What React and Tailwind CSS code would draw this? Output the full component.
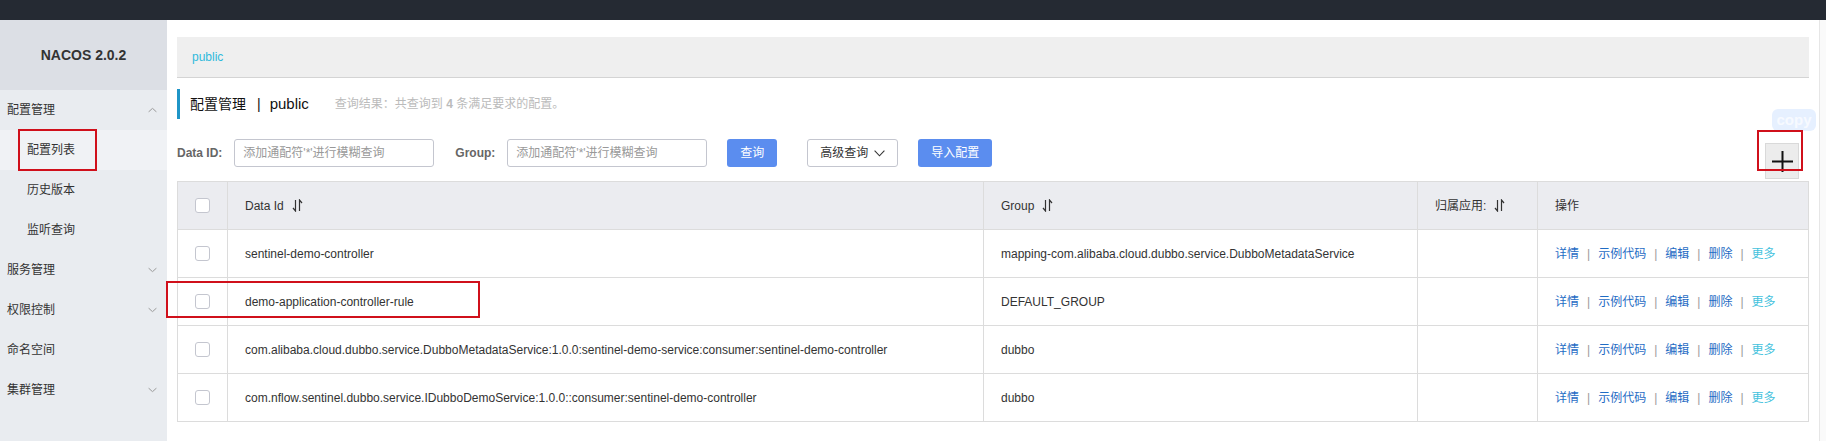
import React from "react";

const FONT = "font-['Liberation_Sans','Noto_Sans_CJK_SC',sans-serif]";

function Chevron({ up }) {
  return (
    <svg width="9" height="5" viewBox="0 0 9 5" className="absolute right-[10px] top-1/2 -translate-y-1/2">
      {up ? (
        <path d="M0.5 4.5 L4.5 0.8 L8.5 4.5" fill="none" stroke="#999" strokeWidth="1" />
      ) : (
        <path d="M0.5 0.5 L4.5 4.2 L8.5 0.5" fill="none" stroke="#999" strokeWidth="1" />
      )}
    </svg>
  );
}

function SortIcon() {
  return (
    <svg width="11" height="13" viewBox="0 0 11 13" className="ml-[8px] inline-block">
      <path d="M3.5 1 V12 L1 9" fill="none" stroke="#333" strokeWidth="1.2" />
      <path d="M7.5 12 V1 L10 4" fill="none" stroke="#333" strokeWidth="1.2" />
    </svg>
  );
}

function Checkbox() {
  return <div className="w-[15px] h-[15px] rounded-[3px] border border-[#c4c6cf] bg-white mx-auto" />;
}

const rows = [
  ["sentinel-demo-controller", "mapping-com.alibaba.cloud.dubbo.service.DubboMetadataService"],
  ["demo-application-controller-rule", "DEFAULT_GROUP"],
  [
    "com.alibaba.cloud.dubbo.service.DubboMetadataService:1.0.0:sentinel-demo-service:consumer:sentinel-demo-controller",
    "dubbo",
  ],
  ["com.nflow.sentinel.dubbo.service.IDubboDemoService:1.0.0::consumer:sentinel-demo-controller", "dubbo"],
];

function Actions() {
  const Sep = () => <span className="text-[#999] mx-[8px]">|</span>;
  return (
    <div className="flex items-center text-[12px] text-[#1f6cc4]">
      <span>详情</span>
      <Sep />
      <span>示例代码</span>
      <Sep />
      <span>编辑</span>
      <Sep />
      <span>删除</span>
      <Sep />
      <span className="text-[#44c2dd]">更多</span>
    </div>
  );
}

export default function App() {
  const menu = [
    { label: "配置管理", chevron: "up", sub: false },
    { label: "配置列表", sub: true, active: true },
    { label: "历史版本", sub: true },
    { label: "监听查询", sub: true },
    { label: "服务管理", chevron: "down" },
    { label: "权限控制", chevron: "down" },
    { label: "命名空间" },
    { label: "集群管理", chevron: "down" },
  ];

  return (
    <div className={`${FONT} w-[1826px] h-[441px] flex flex-col overflow-hidden bg-white`}>
      <div className="h-[20px] bg-[#252a33] shrink-0" />
      <div className="flex flex-1 min-h-0">
        {/* Sidebar */}
        <aside className="relative w-[167px] shrink-0 bg-[#e9ecf0]">
          <div className="h-[70px] bg-[#dcdfe5] flex items-center justify-center text-[14px] font-bold text-[#333]">
            NACOS 2.0.2
          </div>
          {menu.map((m, i) => (
            <div
              key={i}
              className={`relative h-[40px] flex items-center text-[12px] text-[#333] ${
                m.sub ? "pl-[27px]" : "pl-[7px]"
              } ${m.active ? "bg-[#f0f2f5]" : ""}`}
            >
              {m.label}
              {m.chevron && <Chevron up={m.chevron === "up"} />}
            </div>
          ))}
          <div className="absolute left-[18px] top-[109px] w-[79px] h-[42px] border-2 border-[#d0101b]" />
        </aside>

        {/* Main */}
        <main className="relative flex-1 min-w-0 pl-[10px] pr-[10px] pt-[17px]">
          <div className="h-[41px] bg-[#efefef] border-b border-[#d4d4d4] flex items-center pl-[15px] text-[12px] text-[#2fbadc]">
            public
          </div>

          <div className="mt-[11px] h-[30px] flex items-center border-l-[3px] border-[#1f95c7] pl-[10px]">
            <span className="text-[14px] text-[#111]">配置管理</span>
            <span className="text-[14px] text-[#111] ml-[11px]">|</span>
            <span className="text-[15px] text-[#111] ml-[9px]">public</span>
            <span className="text-[12px] text-[#bbb] ml-[26px]">
              查询结果：共查询到 <b className="font-bold">4</b> 条满足要求的配置。
            </span>
          </div>

          <div className="mt-[20px] h-[28px] flex items-center">
            <span className="text-[12px] font-bold text-[#666]">Data ID:</span>
            <div className="ml-[12px] w-[200px] h-[28px] border border-[#c4c6cf] rounded-[3px] flex items-center pl-[8px] text-[12px] text-[#999]">
              添加通配符'*'进行模糊查询
            </div>
            <span className="ml-[21px] text-[12px] font-bold text-[#666]">Group:</span>
            <div className="ml-[12px] w-[200px] h-[28px] border border-[#c4c6cf] rounded-[3px] flex items-center pl-[8px] text-[12px] text-[#999]">
              添加通配符'*'进行模糊查询
            </div>
            <div className="ml-[20px] w-[50px] h-[28px] rounded-[3px] bg-[#5b8def] text-white text-[12px] flex items-center justify-center">
              查询
            </div>
            <div className="ml-[30px] w-[91px] h-[28px] rounded-[3px] border border-[#c4c6cf] bg-white text-[#333] text-[12px] flex items-center justify-center">
              高级查询
              <svg width="11" height="7" viewBox="0 0 11 7" className="ml-[6px]">
                <path d="M0.6 0.7 L5.5 5.8 L10.4 0.7" fill="none" stroke="#333" strokeWidth="1.1" />
              </svg>
            </div>
            <div className="ml-[20px] w-[74px] h-[28px] rounded-[3px] bg-[#5b8def] text-white text-[12px] flex items-center justify-center">
              导入配置
            </div>
          </div>

          <table className="mt-[14px] w-[1631px] table-fixed border-collapse border border-[#dcdcdc] text-[12px] text-[#333]">
            <colgroup>
              <col className="w-[50px]" />
              <col className="w-[756px]" />
              <col className="w-[434px]" />
              <col className="w-[120px]" />
              <col className="w-[271px]" />
            </colgroup>
            <thead>
              <tr className="h-[48px] bg-[#ebecf0]">
                <th className="border-r border-[#dcdcdc] font-normal">
                  <Checkbox />
                </th>
                <th className="border-r border-[#dcdcdc] font-normal text-left pl-[17px]">
                  <span className="inline-flex items-center">
                    Data Id
                    <SortIcon />
                  </span>
                </th>
                <th className="border-r border-[#dcdcdc] font-normal text-left pl-[17px]">
                  <span className="inline-flex items-center">
                    Group
                    <SortIcon />
                  </span>
                </th>
                <th className="border-r border-[#dcdcdc] font-normal text-left pl-[17px]">
                  <span className="inline-flex items-center">
                    归属应用:
                    <SortIcon />
                  </span>
                </th>
                <th className="font-normal text-left pl-[17px]">操作</th>
              </tr>
            </thead>
            <tbody>
              {rows.map((r, i) => (
                <tr key={i} className="h-[48px] border-t border-[#dcdcdc]">
                  <td className="border-r border-[#dcdcdc]">
                    <Checkbox />
                  </td>
                  <td className="border-r border-[#dcdcdc] pl-[17px] whitespace-nowrap">{r[0]}</td>
                  <td className="border-r border-[#dcdcdc] pl-[17px] whitespace-nowrap">{r[1]}</td>
                  <td className="border-r border-[#dcdcdc]" />
                  <td className="pl-[17px]">
                    <Actions />
                  </td>
                </tr>
              ))}
            </tbody>
          </table>

          {/* overlays */}
          <div className="absolute left-[1605px] top-[89px] w-[44px] h-[22px] rounded-[6px] bg-[#e6f0ff] text-[#f7faff] text-[15px] font-bold flex items-center justify-center">
            copy
          </div>
          <div className="absolute left-[1598px] top-[123px] w-[34px] h-[36px] bg-[#ececec] border border-[#d9d9d9] flex items-center justify-center">
            <svg width="21" height="21" viewBox="0 0 21 21">
              <path d="M0 10.5 H21 M10.5 0 V21" stroke="#111" strokeWidth="2" />
            </svg>
          </div>
          <div className="absolute left-[1590px] top-[110px] w-[46px] h-[41px] border-2 border-[#d0101b]" />
          <div className="absolute left-[-1px] top-[261px] w-[314px] h-[37px] border-2 border-[#d0101b]" />
        </main>

        <div className="w-[7px] shrink-0 border-l border-[#e6e6e6] bg-[#fafafa]" />
      </div>
    </div>
  );
}
